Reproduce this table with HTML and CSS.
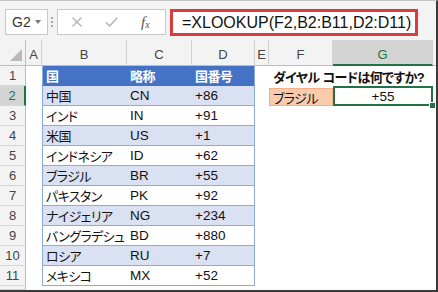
FILE: index.html
```html
<!DOCTYPE html>
<html lang="ja">
<head>
<meta charset="utf-8">
<link rel="stylesheet" href="styles.css">
</head>
<body>
<div class="frame">
  <div class="fbar">
    <div class="namebox"><span>G2</span><span class="caret"></span></div>
    <div class="dots"><i></i><i></i><i></i></div>
    <div class="btns">
      <svg class="ico-x" width="10" height="10" viewBox="0 0 10 10"><path d="M0.5 0.5L9.5 9.5M9.5 0.5L0.5 9.5" stroke="#b4b4b4" stroke-width="1.4" fill="none"/></svg>
      <svg class="ico-ck" width="13" height="10" viewBox="0 0 13 10"><path d="M0.8 5.2L4.6 9L12.2 0.8" stroke="#b4b4b4" stroke-width="1.5" fill="none"/></svg>
      <span class="fx">f<sub>x</sub></span>
    </div>
    <div class="formula">=XLOOKUP(F2,B2:B11,D2:D11)</div>
    <div class="fend"></div>
  </div>
  <div class="sheet">
    <div class="corner"><span class="tri"></span></div>
    <div class="ch">A</div><div class="ch">B</div><div class="ch">C</div><div class="ch">D</div><div class="ch">E</div><div class="ch">F</div><div class="ch sel">G</div><div class="ch"></div>

    <div class="rh">1</div><div class="c"></div><div class="c jp t th tl">国</div><div class="c jp t th">略称</div><div class="c jp t th tr">国番号</div><div class="c"></div><div class="c jp q">ダイヤル コードは何ですか?</div><div class="c"></div><div class="c"></div>

    <div class="rh sel">2</div><div class="c"></div><div class="c jp t band tl">中国</div><div class="c t band">CN</div><div class="c t band tr">+86</div><div class="c"></div><div class="c jp pick">ブラジル</div><div class="c cur">+55<span class="handle"></span></div><div class="c"></div>

    <div class="rh">3</div><div class="c"></div><div class="c jp t tl">インド</div><div class="c t">IN</div><div class="c t tr">+91</div><div class="c"></div><div class="c"></div><div class="c"></div><div class="c"></div>

    <div class="rh">4</div><div class="c"></div><div class="c jp t band tl">米国</div><div class="c t band">US</div><div class="c t band tr">+1</div><div class="c"></div><div class="c"></div><div class="c"></div><div class="c"></div>

    <div class="rh">5</div><div class="c"></div><div class="c jp t tl">インドネシア</div><div class="c t">ID</div><div class="c t tr">+62</div><div class="c"></div><div class="c"></div><div class="c"></div><div class="c"></div>

    <div class="rh">6</div><div class="c"></div><div class="c jp t band tl">ブラジル</div><div class="c t band">BR</div><div class="c t band tr">+55</div><div class="c"></div><div class="c"></div><div class="c"></div><div class="c"></div>

    <div class="rh">7</div><div class="c"></div><div class="c jp t tl">パキスタン</div><div class="c t">PK</div><div class="c t tr">+92</div><div class="c"></div><div class="c"></div><div class="c"></div><div class="c"></div>

    <div class="rh">8</div><div class="c"></div><div class="c jp t band tl">ナイジェリア</div><div class="c t band">NG</div><div class="c t band tr">+234</div><div class="c"></div><div class="c"></div><div class="c"></div><div class="c"></div>

    <div class="rh">9</div><div class="c"></div><div class="c jp t tl">バングラデシュ</div><div class="c t">BD</div><div class="c t tr">+880</div><div class="c"></div><div class="c"></div><div class="c"></div><div class="c"></div>

    <div class="rh">10</div><div class="c"></div><div class="c jp t band tl">ロシア</div><div class="c t band">RU</div><div class="c t band tr">+7</div><div class="c"></div><div class="c"></div><div class="c"></div><div class="c"></div>

    <div class="rh">11</div><div class="c"></div><div class="c jp t tl">メキシコ</div><div class="c t">MX</div><div class="c t tr">+52</div><div class="c"></div><div class="c"></div><div class="c"></div><div class="c"></div>

    <div class="rh"></div><div class="c"></div><div class="c"></div><div class="c"></div><div class="c"></div><div class="c"></div><div class="c"></div><div class="c"></div><div class="c"></div>
  </div>
</div>
</body>
</html>
```

FILE: styles.css
```css
html, body {
  margin: 0;
  padding: 0;
  background: #fff;
}

.frame {
  width: 438px;
  height: 292px;
  box-sizing: border-box;
  border-top: 1px solid #c4c4c4;
  border-right: 2px solid #3a3a3a;
  border-bottom: 2px solid #3a3a3a;
  display: flex;
  flex-direction: column;
  overflow: hidden;
  font-family: "Liberation Sans", "Noto Sans CJK JP", sans-serif;
}

/* formula bar */
.fbar {
  height: 39px;
  flex: none;
  box-sizing: border-box;
  background: #f3f3f3;
  display: flex;
  align-items: flex-start;
  padding: 8px 0 0 5px;
}

.namebox {
  width: 43px;
  height: 26px;
  box-sizing: border-box;
  border: 1px solid #c8c8c8;
  background: #fff;
  display: flex;
  align-items: center;
  gap: 4px;
  padding-left: 6px;
  font-size: 14px;
  color: #333;
}

.caret {
  width: 0;
  height: 0;
  border-left: 3.5px solid transparent;
  border-right: 3.5px solid transparent;
  border-top: 4px solid #7a7a7a;
}

.dots {
  margin: 8px 0 0 3px;
  width: 2px;
  display: flex;
  flex-direction: column;
  gap: 2px;
}

.dots i {
  display: block;
  width: 2px;
  height: 2px;
  background: #a8a8a8;
}

.btns {
  margin-left: 4px;
  width: 109px;
  height: 26px;
  box-sizing: border-box;
  border: 1px solid #c8c8c8;
  background: #fff;
  display: flex;
  align-items: center;
  padding-left: 14px;
}

.ico-ck {
  margin-left: 23px;
}

.fx {
  margin-left: 23px;
  font-family: "Liberation Serif", serif;
  font-style: italic;
  font-size: 15px;
  color: #555;
  line-height: 1;
}

.fx sub {
  font-size: 10px;
  vertical-align: -1px;
}

.formula {
  margin-left: 4px;
  width: 248px;
  height: 27px;
  box-sizing: border-box;
  border: 3px solid #dc3b3b;
  background: #fff;
  display: flex;
  align-items: center;
  padding-left: 9px;
  font-size: 16px;
  color: #111;
  white-space: nowrap;
}

.fend {
  flex: 1;
  align-self: stretch;
}

/* sheet grid */
.sheet {
  flex: 1;
  display: grid;
  grid-template-columns: 26px 16px 85px 65px 63px 14px 64px 100px 1fr;
  grid-template-rows: 26px repeat(11, 20px) 1fr;
  background: #fff;
}

.corner {
  background: #f3f3f3;
  border-right: 1px solid #bdbdbd;
  border-bottom: 1px solid #bdbdbd;
  box-sizing: border-box;
  display: flex;
  align-items: flex-end;
  justify-content: flex-end;
  padding: 0 3px 4px 0;
}

.tri {
  width: 12px;
  height: 12px;
  background: #b9b9b9;
  clip-path: polygon(100% 0, 100% 100%, 0 100%);
}

.ch {
  background: #f3f3f3;
  border-right: 1px solid #d2d2d2;
  border-bottom: 1px solid #bdbdbd;
  box-sizing: border-box;
  display: flex;
  align-items: center;
  justify-content: center;
  padding-top: 4px;
  font-size: 13px;
  color: #444;
}

.ch.sel {
  background: #d4d4d4;
  color: #217346;
  border-bottom: 2px solid #217346;
}

.rh {
  background: #f3f3f3;
  border-right: 1px solid #bdbdbd;
  border-bottom: 1px solid #d6d6d6;
  box-sizing: border-box;
  display: flex;
  align-items: center;
  justify-content: center;
  font-size: 13px;
  color: #444;
}

.rh.sel {
  background: #d4d4d4;
  color: #217346;
  border-right: 2px solid #217346;
}

.c {
  box-sizing: border-box;
  min-width: 0;
  display: flex;
  align-items: center;
  padding: 0 3px;
  font-size: 13.5px;
  color: #111;
  white-space: nowrap;
  font-feature-settings: "palt";
}

.c.jp {
  font-size: 13px;
  letter-spacing: -0.6px;
}

.t {
  border-bottom: 1px solid #8eaadb;
}

.tl {
  border-left: 1px solid #8eaadb;
}

.tr {
  border-right: 1px solid #8eaadb;
}

.th {
  background: #4472c4;
  color: #fff;
  font-weight: bold;
  border-bottom-color: #4472c4;
}

.band {
  background: #d9e1f2;
}

.q {
  font-weight: bold;
  padding-left: 4px;
  overflow: visible;
}

.pick {
  background: #f8cbad;
  border: 1px solid #f4b084;
  margin-top: 2px;
}

.cur {
  position: relative;
  justify-content: center;
  box-shadow: inset 0 0 0 2px #217346;
}

.handle {
  position: absolute;
  right: -3px;
  bottom: -3px;
  width: 5px;
  height: 5px;
  background: #217346;
  border: 1px solid #fff;
}
```
